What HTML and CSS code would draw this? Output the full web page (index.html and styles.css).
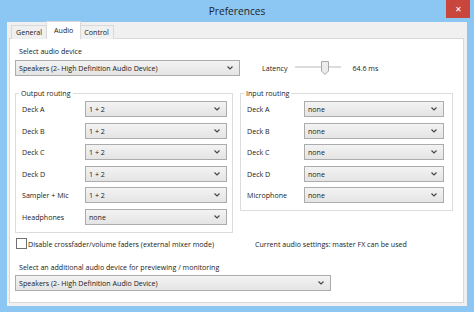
FILE: index.html
```html
<!DOCTYPE html>
<html lang="en">

<head>
    <meta charset="UTF-8">
    <title>Preferences</title>
    <link rel="stylesheet" href="styles.css">
</head>

<body>
    <div class="window">
        <div class="titlebar">
            <span></span>
            <span class="title">Preferences</span>
            <div class="close">&#x2715;</div>
        </div>

        <div class="client">
            <div class="tabs">
                <div class="tab">General</div>
                <div class="tab active">Audio</div>
                <div class="tab">Control</div>
            </div>

            <div class="panel">
                <div class="caption first">Select audio device</div>
                <div class="device-row">
                    <div class="combo device">
                        <span>Speakers (2- High Definition Audio Device)</span>
                        <svg class="chev" width="6" height="4" viewBox="0 0 6 4"><path d="M0.5 0.5 L3 3 L5.5 0.5" fill="none" stroke="#444" stroke-width="1.1"/></svg>
                    </div>
                    <span class="latency">Latency</span>
                    <div class="slider">
                        <svg width="46" height="16" viewBox="0 0 46 16">
                            <rect x="0" y="6" width="46" height="2" fill="#dcdcdc"/>
                            <path d="M26.5 1.5 H33.5 V11 L30 14.5 L26.5 11 Z" fill="#ececec" stroke="#a9a9a9"/>
                        </svg>
                    </div>
                    <span class="ms">64.6 ms</span>
                </div>

                <div class="groups">
                    <fieldset class="group output">
                        <legend>Output routing</legend>
                        <div class="row"><span class="name">Deck A</span><div class="combo"><span>1 + 2</span><svg class="chev" width="6" height="4" viewBox="0 0 6 4"><path d="M0.5 0.5 L3 3 L5.5 0.5" fill="none" stroke="#444" stroke-width="1.1"/></svg></div></div>
                        <div class="row"><span class="name">Deck B</span><div class="combo"><span>1 + 2</span><svg class="chev" width="6" height="4" viewBox="0 0 6 4"><path d="M0.5 0.5 L3 3 L5.5 0.5" fill="none" stroke="#444" stroke-width="1.1"/></svg></div></div>
                        <div class="row"><span class="name">Deck C</span><div class="combo"><span>1 + 2</span><svg class="chev" width="6" height="4" viewBox="0 0 6 4"><path d="M0.5 0.5 L3 3 L5.5 0.5" fill="none" stroke="#444" stroke-width="1.1"/></svg></div></div>
                        <div class="row"><span class="name">Deck D</span><div class="combo"><span>1 + 2</span><svg class="chev" width="6" height="4" viewBox="0 0 6 4"><path d="M0.5 0.5 L3 3 L5.5 0.5" fill="none" stroke="#444" stroke-width="1.1"/></svg></div></div>
                        <div class="row"><span class="name">Sampler + Mic</span><div class="combo"><span>1 + 2</span><svg class="chev" width="6" height="4" viewBox="0 0 6 4"><path d="M0.5 0.5 L3 3 L5.5 0.5" fill="none" stroke="#444" stroke-width="1.1"/></svg></div></div>
                        <div class="row"><span class="name">Headphones</span><div class="combo"><span>none</span><svg class="chev" width="6" height="4" viewBox="0 0 6 4"><path d="M0.5 0.5 L3 3 L5.5 0.5" fill="none" stroke="#444" stroke-width="1.1"/></svg></div></div>
                    </fieldset>

                    <fieldset class="group input">
                        <legend>Input routing</legend>
                        <div class="row"><span class="name">Deck A</span><div class="combo"><span>none</span><svg class="chev" width="6" height="4" viewBox="0 0 6 4"><path d="M0.5 0.5 L3 3 L5.5 0.5" fill="none" stroke="#444" stroke-width="1.1"/></svg></div></div>
                        <div class="row"><span class="name">Deck B</span><div class="combo"><span>none</span><svg class="chev" width="6" height="4" viewBox="0 0 6 4"><path d="M0.5 0.5 L3 3 L5.5 0.5" fill="none" stroke="#444" stroke-width="1.1"/></svg></div></div>
                        <div class="row"><span class="name">Deck C</span><div class="combo"><span>none</span><svg class="chev" width="6" height="4" viewBox="0 0 6 4"><path d="M0.5 0.5 L3 3 L5.5 0.5" fill="none" stroke="#444" stroke-width="1.1"/></svg></div></div>
                        <div class="row"><span class="name">Deck D</span><div class="combo"><span>none</span><svg class="chev" width="6" height="4" viewBox="0 0 6 4"><path d="M0.5 0.5 L3 3 L5.5 0.5" fill="none" stroke="#444" stroke-width="1.1"/></svg></div></div>
                        <div class="row"><span class="name">Microphone</span><div class="combo"><span>none</span><svg class="chev" width="6" height="4" viewBox="0 0 6 4"><path d="M0.5 0.5 L3 3 L5.5 0.5" fill="none" stroke="#444" stroke-width="1.1"/></svg></div></div>
                    </fieldset>
                </div>

                <div class="check-row">
                    <label class="check"><span class="box"></span>Disable crossfader/volume faders (external mixer mode)</label>
                    <span class="status">Current audio settings: master FX can be used</span>
                </div>

                <div class="caption second">Select an additional audio device for previewing / monitoring</div>
                <div class="combo monitor">
                    <span>Speakers (2- High Definition Audio Device)</span>
                    <svg class="chev" width="6" height="4" viewBox="0 0 6 4"><path d="M0.5 0.5 L3 3 L5.5 0.5" fill="none" stroke="#444" stroke-width="1.1"/></svg>
                </div>
            </div>
        </div>
    </div>
</body>

</html>
```

FILE: styles.css
```css
body {
    margin: 0;
    background: #8cc7f4;
    font-family: "Open Sans", "Liberation Sans", sans-serif;
    font-size: 7.1px;
    color: #1a1a1a;
}

.window {
    width: 474px;
    height: 312px;
    background: #8cc7f4;
}

.titlebar {
    height: 22px;
    display: grid;
    grid-template-columns: 1fr auto 1fr;
    align-items: start;
}

.title {
    font-size: 10.2px;
    line-height: 22px;
    color: #1f1f1f;
}

.close {
    justify-self: end;
    margin-right: 4px;
    width: 24px;
    height: 18px;
    background: #c9463d;
    color: #fff;
    font-size: 8px;
    line-height: 17px;
    text-align: center;
}

.client {
    margin: 0 7px;
    height: 284px;
    background: #f0f0f0;
    padding-left: 2px;
}

.tabs {
    display: flex;
    align-items: flex-end;
    height: 17px;
    padding-left: 2px;
    margin-bottom: -1px;
}

.tab {
    position: relative;
    height: 13px;
    line-height: 13px;
    padding: 0 4px;
    border: 1px solid #d9d9d9;
    border-bottom: none;
    background: #f0f0f0;
}

.tab + .tab {
    border-left: none;
}

.tab.active {
    z-index: 1;
    height: 17px;
    line-height: 16px;
    margin: 0 -1px 0 -1px;
    padding: 0 7px;
    background: #fff;
    border-left: 1px solid #d9d9d9;
}

.panel {
    width: 453px;
    height: 263px;
    background: #fff;
    border: 1px solid #d9d9d9;
}

.caption {
    line-height: 12px;
    margin-left: 9px;
}

.caption.first {
    padding-top: 6px;
}

.caption.second {
    margin-top: 11px;
}

.device-row {
    display: flex;
    align-items: center;
    margin: 3px 0 0 5px;
}

.combo {
    box-sizing: border-box;
    height: 16px;
    display: flex;
    align-items: center;
    justify-content: space-between;
    padding: 0 6px 0 3px;
    border: 1px solid #acacac;
    background: linear-gradient(#f3f3f3, #e4e4e4);
}

.chev {
    flex: none;
}

.combo.device {
    width: 225px;
}

.latency {
    margin-left: 22px;
}

.slider {
    margin-left: 8px;
    height: 16px;
}

.ms {
    margin-left: 11px;
}

.groups {
    display: flex;
    align-items: flex-start;
    gap: 7px;
    margin: 11px 0 0 5px;
}

.group {
    margin: 0;
    min-width: 0;
    border: 1px solid #dcdcdc;
    padding: 2px 0 7px 6px;
}

.group legend {
    margin-left: -3px;
    padding: 0 2px;
    line-height: 12px;
}

.group.output {
    width: 205px;
    padding-right: 5px;
}

.group.input {
    width: 197px;
    padding-right: 8px;
}

.row {
    display: flex;
    align-items: center;
    height: 16px;
}

.row + .row {
    margin-top: 5.6px;
}

.output .name {
    width: 63px;
}

.output .combo {
    width: 142px;
}

.input .name {
    width: 57px;
}

.input .combo {
    width: 140px;
}

.check-row {
    display: flex;
    align-items: center;
    height: 12px;
    margin: 5px 0 0 6px;
}

.check {
    display: flex;
    align-items: center;
    width: 239px;
}

.box {
    box-sizing: border-box;
    width: 11px;
    height: 11px;
    border: 1px solid #707070;
    background: #fff;
    margin-right: 1px;
}

.combo.monitor {
    width: 316px;
    margin: 2px 0 0 5px;
}
```
